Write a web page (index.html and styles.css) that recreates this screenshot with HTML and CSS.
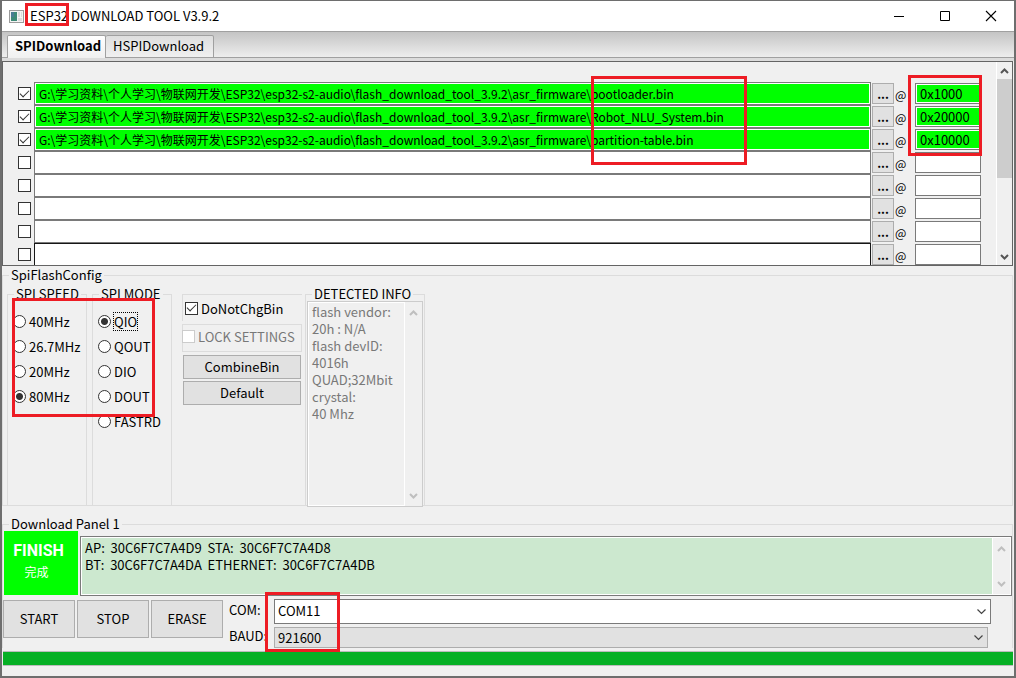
FILE: index.html
```
<!DOCTYPE html>
<html lang="zh-CN">
<head>
<meta charset="utf-8">
<title>ESP32 DOWNLOAD TOOL V3.9.2</title>
<link rel="stylesheet" href="styles.css">
</head>
<body>
<div class="window">
  <header class="titlebar">
    <svg class="app-icon" width="15" height="13" viewBox="0 0 15 13"><rect x=".5" y=".5" width="14" height="12" fill="#f4f4f4" stroke="#9b9b9b"/><path d="M2 2h6v9H2z" fill="#3e8a77"/><path d="M2 2h3v5H2z" fill="#4b7d94"/><path d="M9 2h2v5H9zM9 8h4v3H9zM12 2h1v5h-1z" fill="#dcdcdc"/></svg>
    <h1 class="title">ESP32 DOWNLOAD TOOL V3.9.2</h1>
    <button class="caption" aria-label="Minimize"><svg width="12" height="12"><path d="M1 6.500h10" stroke="#000"/></svg></button>
    <button class="caption" aria-label="Maximize"><svg width="12" height="12"><path d="M1.500 1.500h9v9h-9z" fill="none" stroke="#000"/></svg></button>
    <button class="caption" aria-label="Close"><svg width="12" height="12"><path d="M1 1l10 10M11 1L1 11" stroke="#000" stroke-width="1.100"/></svg></button>
  </header>

  <nav class="tabs">
    <button class="tab tab-active">SPIDownload</button>
    <button class="tab">HSPIDownload</button>
  </nav>

  <section class="files">
    <div class="file-rows">
      <div class="row"><input type="checkbox" class="check" aria-label="File 1" checked><input type="text" class="path filled" aria-label="Path 1" value="G:\学习资料\个人学习\物联网开发\ESP32\esp32-s2-audio\flash_download_tool_3.9.2\asr_firmware\bootloader.bin"><button class="browse">...</button><span class="at">@</span><input type="text" class="addr filled" aria-label="Address 1" value="0x1000"></div>
      <div class="row"><input type="checkbox" class="check" aria-label="File 2" checked><input type="text" class="path filled" aria-label="Path 2" value="G:\学习资料\个人学习\物联网开发\ESP32\esp32-s2-audio\flash_download_tool_3.9.2\asr_firmware\Robot_NLU_System.bin"><button class="browse">...</button><span class="at">@</span><input type="text" class="addr filled" aria-label="Address 2" value="0x20000"></div>
      <div class="row"><input type="checkbox" class="check" aria-label="File 3" checked><input type="text" class="path filled" aria-label="Path 3" value="G:\学习资料\个人学习\物联网开发\ESP32\esp32-s2-audio\flash_download_tool_3.9.2\asr_firmware\partition-table.bin"><button class="browse">...</button><span class="at">@</span><input type="text" class="addr filled" aria-label="Address 3" value="0x10000"></div>
      <div class="row"><input type="checkbox" class="check" aria-label="File 4"><input type="text" class="path" aria-label="Path 4"><button class="browse">...</button><span class="at">@</span><input type="text" class="addr" aria-label="Address 4"></div>
      <div class="row"><input type="checkbox" class="check" aria-label="File 5"><input type="text" class="path" aria-label="Path 5"><button class="browse">...</button><span class="at">@</span><input type="text" class="addr" aria-label="Address 5"></div>
      <div class="row"><input type="checkbox" class="check" aria-label="File 6"><input type="text" class="path" aria-label="Path 6"><button class="browse">...</button><span class="at">@</span><input type="text" class="addr" aria-label="Address 6"></div>
      <div class="row"><input type="checkbox" class="check" aria-label="File 7"><input type="text" class="path" aria-label="Path 7"><button class="browse">...</button><span class="at">@</span><input type="text" class="addr" aria-label="Address 7"></div>
      <div class="row"><input type="checkbox" class="check" aria-label="File 8"><input type="text" class="path path-hover" aria-label="Path 8"><button class="browse">...</button><span class="at">@</span><input type="text" class="addr" aria-label="Address 8"></div>
    </div>
    <div class="scroll scroll-list">
      <svg class="arrow" width="9" height="6" viewBox="0 0 9 6"><path d="M1 5l3.500-3.500L8 5"/></svg>
      <div class="thumb"></div>
      <svg class="arrow" width="9" height="6" viewBox="0 0 9 6"><path d="M1 1l3.500 3.500L8 1"/></svg>
    </div>
    <div class="mark mark-files"></div>
    <div class="mark mark-addr"></div>
  </section>

  <fieldset class="group config">
    <legend>SpiFlashConfig</legend>
    <div class="config-body">
      <fieldset class="group column">
        <legend>SPI SPEED</legend>
        <label class="radio"><input type="radio" name="speed"><span>40MHz</span></label>
        <label class="radio"><input type="radio" name="speed"><span>26.7MHz</span></label>
        <label class="radio"><input type="radio" name="speed"><span>20MHz</span></label>
        <label class="radio"><input type="radio" name="speed" checked><span>80MHz</span></label>
      </fieldset>
      <fieldset class="group column mode">
        <legend>SPI MODE</legend>
        <label class="radio"><input type="radio" name="mode" checked><span class="focused">QIO</span></label>
        <label class="radio"><input type="radio" name="mode"><span>QOUT</span></label>
        <label class="radio"><input type="radio" name="mode"><span>DIO</span></label>
        <label class="radio"><input type="radio" name="mode"><span>DOUT</span></label>
        <label class="radio"><input type="radio" name="mode"><span>FASTRD</span></label>
      </fieldset>
      <div class="options">
        <label class="option option-bin"><input type="checkbox" class="check" checked><span>DoNotChgBin</span></label>
        <label class="option option-lock"><input type="checkbox" class="check" disabled><span>LOCK SETTINGS</span></label>
        <button class="btn">CombineBin</button>
        <button class="btn">Default</button>
      </div>
      <fieldset class="group detected">
        <legend>DETECTED INFO</legend>
        <div class="info">
          <textarea class="info-text" aria-label="Detected info" disabled>flash vendor:
20h : N/A
flash devID:
4016h
QUAD;32Mbit
crystal:
40 Mhz</textarea>
          <div class="scroll scroll-off">
            <svg class="arrow" width="9" height="6" viewBox="0 0 9 6"><path d="M1 5l3.500-3.500L8 5"/></svg>
            <svg class="arrow" width="9" height="6" viewBox="0 0 9 6"><path d="M1 1l3.500 3.500L8 1"/></svg>
          </div>
        </div>
      </fieldset>
      <div class="mark mark-spi"></div>
    </div>
  </fieldset>

  <fieldset class="group download">
    <legend>Download Panel 1</legend>
    <div class="status">
      <div class="finish"><strong>FINISH</strong><span>完成</span></div>
      <div class="log">
        <textarea class="log-text" aria-label="Log" readonly>AP:  30C6F7C7A4D9  STA:  30C6F7C7A4D8
BT:  30C6F7C7A4DA  ETHERNET:  30C6F7C7A4DB</textarea>
        <div class="scroll scroll-off">
          <svg class="arrow" width="9" height="6" viewBox="0 0 9 6"><path d="M1 5l3.500-3.500L8 5"/></svg>
          <svg class="arrow" width="9" height="6" viewBox="0 0 9 6"><path d="M1 1l3.500 3.500L8 1"/></svg>
        </div>
      </div>
    </div>
    <div class="controls">
      <button class="btn action">START</button>
      <button class="btn action">STOP</button>
      <button class="btn action">ERASE</button>
      <div class="ports">
        <label for="com">COM:</label>
        <div class="combo combo-com"><select id="com"><option>COM11</option></select><svg width="11" height="7"><path d="M1.500 1.500l4 4 4-4" fill="none" stroke="#444" stroke-width="1.200"/></svg></div>
        <label for="baud">BAUD:</label>
        <div class="combo combo-baud"><select id="baud"><option>921600</option></select><svg width="11" height="7"><path d="M1.500 1.500l4 4 4-4" fill="none" stroke="#444" stroke-width="1.200"/></svg></div>
        <div class="mark mark-port"></div>
      </div>
    </div>
  </fieldset>
  <div class="progress" role="progressbar" aria-label="Download progress" aria-valuenow="100"><div class="bar" style="width:100%"></div></div>
  <div class="mark mark-title"></div>
</div>
</body>
</html>
```
FILE: styles.css
```
* { box-sizing: border-box; }
body {
  margin: 0;
  background: #f0f0f0;
  color: #000;
  font: 13px/17px "Noto Sans CJK SC", sans-serif;
}
button, input, select, textarea { font: inherit; color: inherit; margin: 0; border-radius: 0; }
.window {
  position: relative;
  min-height: 100vh;
  display: flex;
  flex-direction: column;
  border: solid #6e6e6e;
  border-width: 1px 2px 2px;
  background: #f0f0f0;
}

/* title bar */
.titlebar { display: flex; align-items: center; height: 30px; padding-left: 7px; background: #fff; }
.title { flex: 1; margin: 0 0 0 6px; padding-bottom: 2px; font-size: 13px; font-weight: 400; }
.caption { width: 46px; height: 28px; padding: 0; border: 0; background: none; }
.caption svg { display: block; margin: 0 auto; }

/* tabs */
.tabs {
  display: flex;
  align-items: flex-end;
  height: 30px;
  padding: 0 0 3px 5px;
  border-top: 1px solid #a0a0a0;
  background: linear-gradient(#c4c4c4, #ececec 24px, #f0f0f0);
  box-shadow: inset 0 -3px #dcdcdc, inset 0 -4px #a0a0a0;
}
.tab {
  width: 108px;
  height: 23px;
  padding: 0 0 3px 7px;
  border: 1px solid #a0a0a0;
  border-left-width: 0;
  border-radius: 2px 2px 0 0;
  background: linear-gradient(#dedede, #f0f0f0);
  text-align: left;
  white-space: nowrap;
}
.tab-active { width: 99px; padding-bottom: 4px; border-left-width: 1px; border-bottom: 0; background: linear-gradient(#fff, #f0f0f0); font-weight: 700; }

/* file list */
.files { position: relative; display: flex; height: 205px; margin-right: 1px; border: 1px solid #646464; }
.file-rows { flex: 1; min-width: 0; overflow: hidden; padding: 20px 15px 0 15px; }
.row { display: flex; align-items: center; height: 23px; }
.check {
  appearance: none;
  flex: none;
  width: 13px;
  height: 13px;
  border: 1px solid #333;
  background: #fff;
  display: grid;
  place-items: center;
}
.check:checked::after { content: ""; width: 8px; height: 4px; margin-bottom: 3px; border: solid #333; border-width: 0 0 1px 1px; transform: rotate(-45deg); }
.check:disabled { border-color: #ccc; }
.path { flex: 1; min-width: 0; height: 23px; margin-left: 3px; padding: 0 4px; border: 1px solid #7a7a7a; background: #fff; font-size: 12px; }
.path-hover { border-color: #171717; }
.addr { width: 66px; height: 21px; padding: 0 4px; border: 1px solid #7a7a7a; background: #fff; }
.filled { background: #0f0; box-shadow: inset 0 0 0 1px #fff; }
.browse { width: 22px; height: 21px; margin-left: 1px; padding: 0; border: 1px solid #adadad; background: #e1e1e1; font-size: 12px; font-weight: 700; line-height: 17px; }
.at { width: 21px; padding: 2px 0 0 1px; font-size: 12px; }
.scroll { display: flex; flex-direction: column; align-items: center; justify-content: space-between; background: #f0f0f0; border-left: 1px solid #fff; }
.arrow { flex: none; fill: none; stroke: #555; stroke-width: 2; }
.scroll-list { width: 16px; padding: 6px 0 5px; }
.thumb { width: 15px; height: 99px; margin: 5px 0 auto; background: #cdcdcd; }
.scroll-off { width: 18px; padding: 8px 0 7px; }
.scroll-off .arrow { stroke: #bfbfbf; }

/* groups */
.group { min-width: 0; margin: 0; padding: 0; border: 1px solid #dcdcdc; }
.group > legend { margin-left: 6px; padding: 0 2px; line-height: 18px; white-space: nowrap; }
.config { margin-right: 1px; }
.config-body { position: relative; display: flex; align-items: stretch; height: 221px; padding: 1px 0 0 4px; }
.column { width: 80px; border-bottom: 0; }
.column > legend { margin-left: 6px; }
.mode { margin-left: 5px; }
.radio { display: flex; align-items: center; gap: 3px; height: 25px; padding-left: 5px; white-space: nowrap; }
.column legend + .radio { margin-top: 6px; }
.radio input {
  appearance: none;
  flex: none;
  width: 13px;
  height: 13px;
  border: 1px solid #333;
  border-radius: 50%;
  background: #fff;
}
.radio input:checked { background: radial-gradient(circle, #333 3px, #fff 4px); }
.focused { outline: 1px dotted #000; }
.options { display: flex; flex-direction: column; gap: 3px; width: 120px; margin: 9px 0 0 10px; }
.option { display: flex; align-items: center; gap: 3px; height: 28px; border: 1px solid #dcdcdc; white-space: nowrap; }
.option-bin { height: 27px; padding-left: 2px; border-width: 1px 0 0 1px; }
.option-lock { padding-bottom: 3px; color: #787878; }
.option-lock .check { margin-left: -1px; }
.btn { height: 24px; padding: 0 0 2px; border: 1px solid #adadad; background: #e1e1e1; }
.options .btn { margin: 0 1px; }
.options .btn + .btn { margin-top: -1px; }
.detected { width: 120px; margin-left: 3px; padding: 0 1px; border-bottom: 0; }
.detected > legend { margin-left: 5px; }
.info { display: flex; width: 116px; height: 206px; margin-top: -2px; border: 1px solid #ccc; box-shadow: inset 0 0 0 1px #fff; }
.info-text { flex: 1; min-width: 0; padding: 1px 0 0 4px; border: 0; background: none; color: #787878; resize: none; overflow: hidden; }

/* download panel */
.download { margin: 9px 1px 0 0; border-bottom: 0; }
.status { display: flex; gap: 2px; margin: -2px 0 0 1px; }
.finish { display: flex; flex-direction: column; align-items: center; width: 74px; height: 64px; padding: 8px 5px 0 0; background: #0f0; color: #fff; }
.finish strong { font: 700 16px/24px "Roboto", sans-serif; }
.finish span { padding-right: 4px; font-size: 12px; }
.log { display: flex; flex: 1; min-width: 0; height: 60px; margin-top: 5px; border: 1px solid #7a7a7a; background: #fff; padding: 1px; }
.log-text { flex: 1; min-width: 0; padding: 1px 3px; border: 0; background: #cce8cf; resize: none; overflow: hidden; outline: 0; }
.controls { display: flex; gap: 2px; margin-top: 4px; }
.action { width: 72px; height: 38px; }
.ports { position: relative; flex: 1; display: grid; grid-template-columns: 45px 1fr; align-items: center; row-gap: 3px; padding: 0 21px 0 4px; margin-top: -1px; }
.ports label { padding-bottom: 4px; }
.combo { position: relative; display: flex; }
.combo select { appearance: none; width: 100%; padding: 0 3px; border: 1px solid #7a7a7a; background: #fff; }
.combo svg { position: absolute; right: 4px; top: 9px; }
.combo-com select { height: 25px; padding-bottom: 2px; }
.combo-baud { margin-right: 3px; }
.combo-baud select { height: 21px; border-color: #adadad; background: #e1e1e1; }
.combo-baud svg { top: 7px; }
.progress { height: 15px; margin: 3px 1px 0; border: solid #bcbcbc; border-width: 1px 0; background: #e6e6e6; }
.bar { height: 100%; background: #06b025; }

/* red annotation frames drawn over the window */
.mark { position: absolute; border: 3px solid #ed1c24; pointer-events: none; }
.mark-title { left: 23px; top: 2px; width: 44px; height: 23px; }
.mark-files { left: 588px; top: 14px; width: 156px; height: 89px; }
.mark-addr { right: 30px; top: 13px; width: 74px; height: 81px; }
.mark-spi { left: 9px; top: 14px; width: 143px; height: 119px; }
.mark-port { left: 40px; top: -7px; width: 75px; height: 60px; }
```
